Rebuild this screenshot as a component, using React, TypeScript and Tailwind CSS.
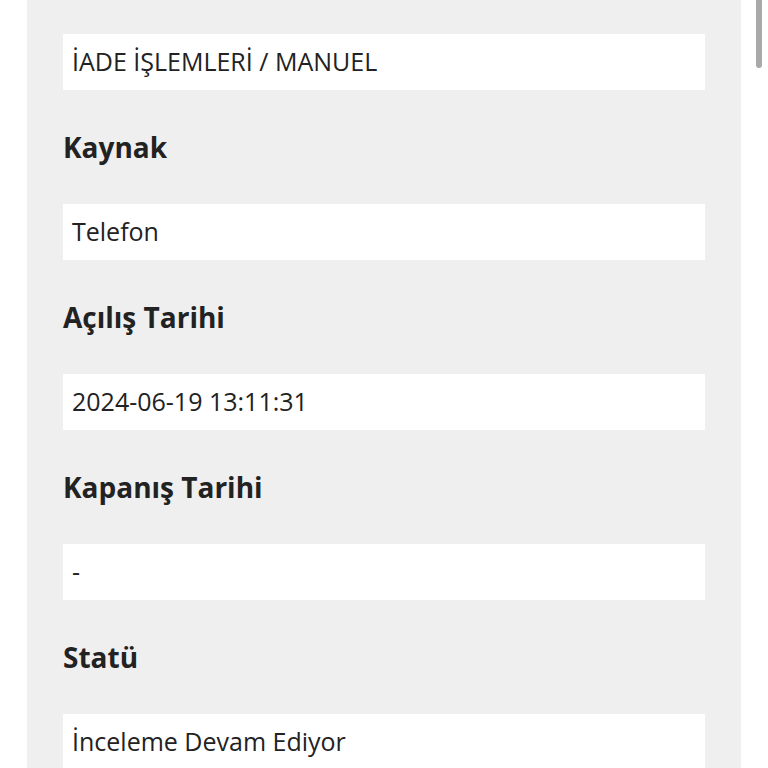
const fields = [
  { label: null, value: "İADE İŞLEMLERİ / MANUEL" },
  { label: "Kaynak", value: "Telefon" },
  { label: "Açılış Tarihi", value: "2024-06-19 13:11:31" },
  { label: "Kapanış Tarihi", value: "-" },
  { label: "Statü", value: "İnceleme Devam Ediyor" },
];

export default function App() {
  return (
    <div
      className="relative h-[768px] w-[768px] overflow-hidden bg-white"
      style={{ fontFamily: '"Open Sans", "Noto Sans", sans-serif' }}
    >
      <div className="ml-[27px] h-full w-[714px] bg-[#efefef] px-[36px] pt-[34px]">
        {fields.map((f, i) => (
          <div key={i}>
            {f.label && (
              <h3 className="my-[38px] text-[28px] font-bold leading-[38px] text-[#222]">
                {f.label}
              </h3>
            )}
            <div className="flex h-[56px] items-center bg-white px-[9px] text-[25px] text-[#222]">
              {f.value}
            </div>
          </div>
        ))}
      </div>
      <div className="absolute right-[6px] top-0 h-[68px] w-[6px] rounded-b-full bg-[#a9a9a9]" />
    </div>
  );
}
